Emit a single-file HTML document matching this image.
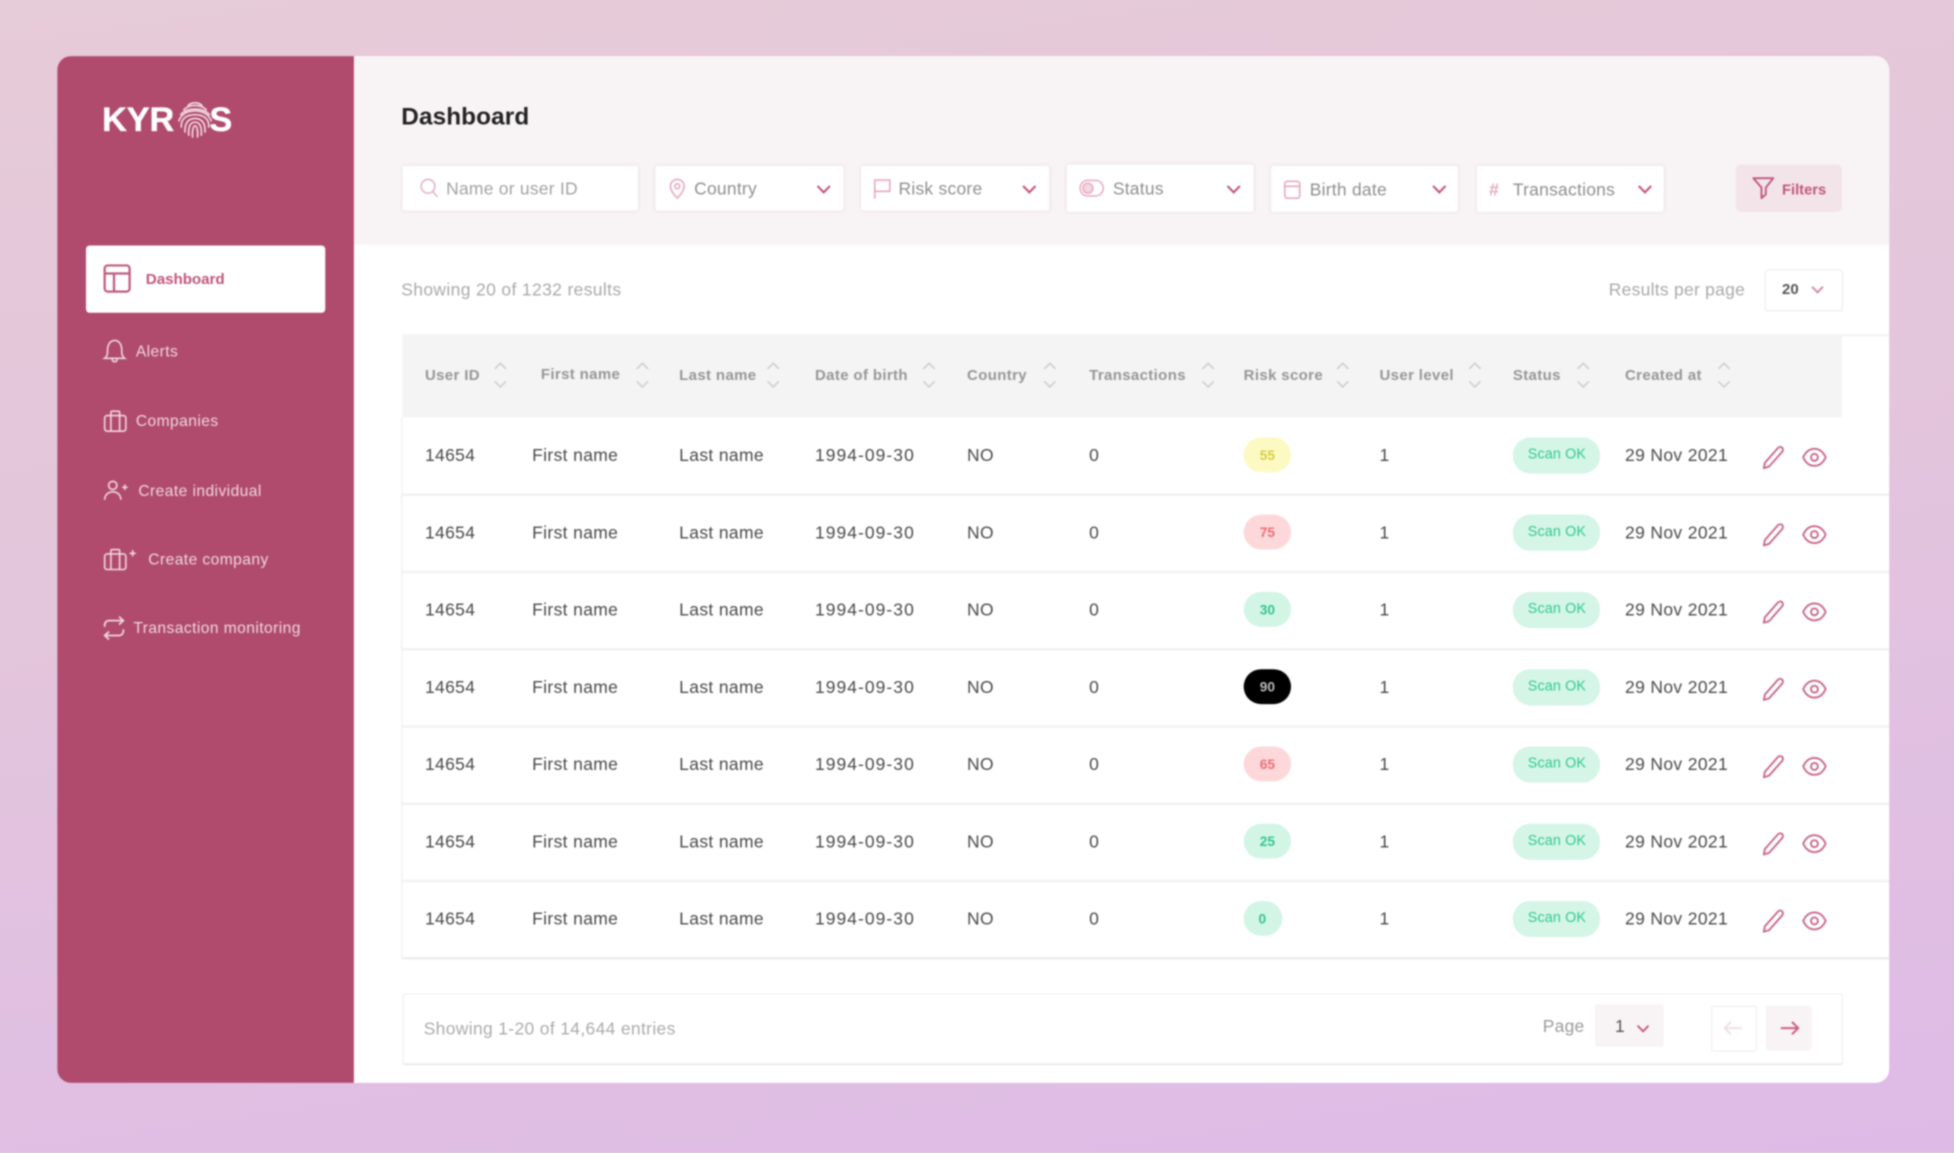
<!DOCTYPE html>
<html lang="en"><head><meta charset="utf-8"><title>Kyros Dashboard</title>
<style>
html,body{margin:0;padding:0;width:1954px;height:1152px;overflow:hidden;background:#e2c4de}
#bg{position:absolute;left:0;top:0;width:1954px;height:1152px;background:linear-gradient(172deg,#e6cbd8 0%,#e3c5dc 45%,#debbe7 100%)}
#w{position:absolute;left:0;top:0;width:1568px;height:925px;transform:scale(1.24617);transform-origin:0 0;filter:blur(.7px);font-family:"Liberation Sans",sans-serif}
#w div,#w span,#w svg{position:absolute}
.t{line-height:0;white-space:nowrap;top:0}
.p{left:46px;top:45px;width:1470px;height:823.500px;background:#fff;border-radius:11px;overflow:hidden}
.side{left:46px;top:45px;width:238px;height:823.500px;background:#b04b6d;border-radius:11px 0 0 11px}
.band{left:284px;top:45px;width:1232px;height:151px;background:#f8f3f5;border-radius:0 11px 0 0}
.nav{color:#f0d5df;font-size:12.500px;letter-spacing:.35px}
.f{background:#fff;border-radius:2px;box-shadow:0 0 3px rgba(180,150,165,.22)}
.ft{color:#8e8e8e;font-size:14px;letter-spacing:.2px;margin-top:.5px}
.h{color:#969696;font-size:12px;font-weight:700;letter-spacing:.3px;top:301px}
.r{left:0;width:1568px;height:0}
.c{color:#4a4a4a;font-size:14px;letter-spacing:.3px;top:-.5px}
.d{letter-spacing:.85px}
.b{height:28px;top:-14px;width:38px;left:998px;border-radius:14px}
.bt{left:1017px;font-size:11px;font-weight:700;transform:translateX(-50%);top:.5px}
.s{left:1214px;top:-14.500px;width:70px;height:29px;border-radius:14px;background:#d5f5e7}
.st{left:1226px;color:#2fcb90;font-size:11.500px;letter-spacing:.1px}
.y{background:#fdf9c3}.yt{color:#d8ce40}
.e{background:#fdd8da}.et{color:#ec6e75}
.g{background:#d2f5e6}.gt{color:#35c48e}
.k{background:#000}.kt{color:#bbb}
.l{left:323px;width:1193px;height:2px;background:#f1f2f2}
svg{overflow:visible;fill:none}
</style></head><body>
<div id="bg"></div>
<div id="w">
<svg width="0" height="0" style="left:0;top:0">
<defs>
<symbol id="pen" viewBox="0 0 18 20" overflow="visible"><path d="M2.200 14.400 12.600 2.600c1-1.100 2.500-1.200 3.400-.4 1 .9 1 2.400 0 3.500L5.600 17.400l-4.200 1.300z" stroke="#c9688a" stroke-width="1.500" stroke-linejoin="round"/></symbol>
<symbol id="eye" viewBox="0 0 20 16" overflow="visible"><path d="M1 8C3 3.600 6.200 1.200 10 1.200S17 3.600 19 8c-2 4.400-5.200 6.800-9 6.800S3 12.400 1 8z" stroke="#c9688a" stroke-width="1.500"/><circle cx="10" cy="8" r="2.800" stroke="#c9688a" stroke-width="1.500"/></symbol>
<symbol id="chev" viewBox="0 0 12 8" overflow="visible"><path d="M1 1.200 6 6.400l5-5.200" stroke="#c4567d" stroke-width="1.700"/></symbol>
<symbol id="sort" viewBox="0 0 11 22" overflow="visible"><path d="M1 6 5.500 1.500 10 6M1 16l4.500 4.500L10 16" stroke="#cfcfcf" stroke-width="1.300"/></symbol>
</defs></svg>

<div class="p"></div>
<div class="band"></div>
<div class="side"></div>

<!-- logo -->
<span class="t" style="left:82px;top:96px;color:#fff;font-size:27.500px;font-weight:700;letter-spacing:-.1px;-webkit-text-stroke:.3px #fff">KYR</span>
<span class="t" style="left:168px;top:96px;color:#fff;font-size:27.500px;font-weight:700;-webkit-text-stroke:.3px #fff">S</span>
<svg style="left:142px;top:81px" width="29" height="30" viewBox="0 0 29 30"><g stroke="#f3dbe3" stroke-width="1.300" stroke-linecap="round">
<path d="M9 3.500C12 .8 17 .8 20 3.500"/><path d="M5.500 7C10 2.500 19 2.500 23.500 7"/><path d="M3 11C8 5 21 5 26 11"/><path d="M1.500 16C4 9.500 10 8 14.500 8S25 9.500 27.500 16"/><path d="M3.500 21C3 14 8 11 14.500 11S26 14 25.500 21"/><path d="M6.500 25C6 18 9 14 14.500 14S23 18 22.500 25"/><path d="M9.500 27.500C9 21 10.500 17 14.500 17S20 21 19.500 27.500"/><path d="M12.500 29C12.200 24 13 20 14.500 20S17 24 16.500 29"/></g></svg>

<!-- nav -->
<div style="left:68.500px;top:196.500px;width:192.500px;height:54px;background:#fff;border-radius:3px"></div>
<svg style="left:83px;top:212px" width="22" height="23" viewBox="0 0 22 23"><g stroke="#c05a7e" stroke-width="1.800"><rect x="1" y="1" width="20" height="21" rx="2.500"/><path d="M1 7.500H21M8.500 7.500V22"/></g></svg>
<span class="t" style="left:117px;top:224px;color:#c2557c;font-size:12.200px;font-weight:700;letter-spacing:-.05px">Dashboard</span>

<svg style="left:83px;top:272px" width="18" height="20" viewBox="0 0 18 20"><g stroke="#f0d5df" stroke-width="1.300"><path d="M1 15.500c2-1.500 2.300-3 2.300-6.500C3.300 4.500 5.500 1.200 9 1.200s5.700 3.300 5.700 7.800c0 3.500.3 5 2.300 6.500z"/><path d="M7 16c0 3 4 3 4 0"/></g></svg>
<span class="t nav" style="left:109px;top:282px">Alerts</span>

<svg style="left:83px;top:329px" width="19" height="18" viewBox="0 0 19 18"><g stroke="#f0d5df" stroke-width="1.300"><rect x="1" y="4.500" width="17" height="12.500" rx="2"/><path d="M6 4.500V2c0-.6.400-1 1-1h5c.6 0 1 .4 1 1v2.500M6 4.500V17M13 4.500V17"/></g></svg>
<span class="t nav" style="left:109px;top:338px">Companies</span>

<svg style="left:83px;top:385px" width="20" height="17" viewBox="0 0 20 17"><g stroke="#f0d5df" stroke-width="1.300"><circle cx="7.500" cy="4.500" r="3.300"/><path d="M1 16c0-4 3-6.300 6.500-6.300S14 12 14 16M15 6h4.500M17.200 3.800v4.400"/></g></svg>
<span class="t nav" style="left:111px;top:394px">Create individual</span>

<svg style="left:83px;top:440px" width="29" height="18" viewBox="0 0 29 18"><g stroke="#f0d5df" stroke-width="1.300"><rect x="1" y="4.500" width="17" height="12.500" rx="2"/><path d="M6 4.500V2c0-.6.400-1 1-1h5c.6 0 1 .4 1 1v2.500M6 4.500V17M13 4.500V17M21 4h5M23.500 1.500v5"/></g></svg>
<span class="t nav" style="left:119px;top:449px">Create company</span>

<svg style="left:83px;top:494px" width="17" height="20" viewBox="0 0 17 20"><g stroke="#f0d5df" stroke-width="1.400"><path d="M1 9V7.500C1 5.500 2.500 4 4.500 4H16M12.500.8 16 4l-3.500 3.200M16 11v1.500c0 2-1.500 3.500-3.500 3.500H1M4.500 12.800 1 16l3.500 3.200"/></g></svg>
<span class="t nav" style="left:107px;top:504px">Transaction monitoring</span>

<!-- title -->
<span class="t" style="left:322px;top:94px;color:#232323;font-size:19.500px;font-weight:700;letter-spacing:.1px">Dashboard</span>

<!-- filters -->
<div class="f" style="left:323px;top:133px;width:189px;height:35.500px"></div>
<svg style="left:337px;top:143px" width="15" height="16" viewBox="0 0 15 16"><g stroke="#e5b4c6" stroke-width="1.300"><circle cx="6.500" cy="6.500" r="5.500"/><path d="M10.500 11l3.500 4"/></g></svg>
<span class="t ft" style="left:358px;top:150px;color:#a2a2a2">Name or user ID</span>

<div class="f" style="left:526px;top:132.500px;width:151px;height:36px"></div>
<svg style="left:537px;top:143px" width="13" height="17" viewBox="0 0 13 17"><g stroke="#e5a9bf" stroke-width="1.300"><path d="M6.500 16C3 12.500 1 9.500 1 6.500a5.500 5.500 0 0 1 11 0C12 9.500 10 12.500 6.500 16z"/><circle cx="6.500" cy="6.500" r="2"/></g></svg>
<span class="t ft" style="left:557px;top:150px">Country</span>
<svg style="left:655px;top:148px" width="12" height="7"><use href="#chev" width="12" height="8"/></svg>

<div class="f" style="left:691px;top:132.500px;width:151px;height:36px"></div>
<svg style="left:701px;top:143px" width="14" height="17" viewBox="0 0 14 17"><path d="M1 16.500V1.500H13V10.500H1" stroke="#e5a9bf" stroke-width="1.300"/></svg>
<span class="t ft" style="left:721px;top:150px">Risk score</span>
<svg style="left:820px;top:148px" width="12" height="7"><use href="#chev" width="12" height="8"/></svg>

<div class="f" style="left:856px;top:131.500px;width:150px;height:38px"></div>
<svg style="left:866px;top:144px" width="20" height="14" viewBox="0 0 20 14"><g stroke="#e5a9bf" stroke-width="1.200"><rect x=".7" y=".7" width="18.600" height="12.600" rx="6.300"/><circle cx="7" cy="7" r="4" fill="#f5d7e1"/></g></svg>
<span class="t ft" style="left:893px;top:150px">Status</span>
<svg style="left:984px;top:148px" width="12" height="7"><use href="#chev" width="12" height="8"/></svg>

<div class="f" style="left:1020px;top:132.500px;width:150px;height:37px"></div>
<svg style="left:1030px;top:144px" width="14" height="16" viewBox="0 0 14 16"><g stroke="#e5a9bf" stroke-width="1.300"><rect x="1" y="1.500" width="12" height="13.500" rx="2"/><path d="M1 5.500H13"/></g></svg>
<span class="t ft" style="left:1051px;top:151px">Birth date</span>
<svg style="left:1149px;top:148px" width="12" height="7"><use href="#chev" width="12" height="8"/></svg>

<div class="f" style="left:1185px;top:132.500px;width:150px;height:37px"></div>
<span class="t" style="left:1195px;top:152px;color:#e5a9bf;font-size:14px;font-weight:700">#</span>
<span class="t ft" style="left:1214px;top:151px">Transactions</span>
<svg style="left:1314px;top:148px" width="12" height="7"><use href="#chev" width="12" height="8"/></svg>

<div style="left:1393px;top:132px;width:85px;height:38px;background:#f3e4ea;border-radius:4px"></div>
<svg style="left:1406px;top:142px" width="18" height="18" viewBox="0 0 18 18"><path d="M1 1H17L11 8.500V14L7.500 17V8.500z" stroke="#c0577c" stroke-width="1.500" stroke-linejoin="round"/></svg>
<span class="t" style="left:1430px;top:151.500px;color:#c0577c;font-size:11.800px;font-weight:700">Filters</span>

<!-- results bar -->
<span class="t" style="left:322px;top:231.500px;color:#a9a9a9;font-size:14px;letter-spacing:.3px">Showing 20 of 1232 results</span>
<span class="t" style="left:1291px;top:231.500px;color:#a9a9a9;font-size:14px;letter-spacing:.22px">Results per page</span>
<div style="left:1416px;top:216px;width:61px;height:32px;background:#fff;border:1px solid #eeeeee;border-radius:3px"></div>
<span class="t" style="left:1430px;top:232px;color:#555;font-size:12px;font-weight:700">20</span>
<svg style="left:1453px;top:229px" width="11" height="6"><use href="#chev" width="11" height="7" style="opacity:.7"/></svg>

<!-- table -->
<div style="left:323px;top:268px;width:1155px;height:67px;background:#f4f4f4;border-radius:2px 2px 0 0"></div>
<div style="left:1478px;top:268px;width:38px;height:2px;background:#f4f4f4"></div>
<div style="left:322px;top:335px;width:1px;height:434px;background:#f0f0f0"></div>
<span class="t h" style="left:341px">User ID</span><svg style="left:396px;top:290px" width="11" height="22"><use href="#sort" width="11" height="22"/></svg>
<span class="t h" style="left:434px;top:300px">First name</span><svg style="left:510px;top:290px" width="11" height="22"><use href="#sort" width="11" height="22"/></svg>
<span class="t h" style="left:545px">Last name</span><svg style="left:615px;top:290px" width="11" height="22"><use href="#sort" width="11" height="22"/></svg>
<span class="t h" style="left:654px">Date of birth</span><svg style="left:740px;top:290px" width="11" height="22"><use href="#sort" width="11" height="22"/></svg>
<span class="t h" style="left:776px">Country</span><svg style="left:837px;top:290px" width="11" height="22"><use href="#sort" width="11" height="22"/></svg>
<span class="t h" style="left:874px">Transactions</span><svg style="left:964px;top:290px" width="11" height="22"><use href="#sort" width="11" height="22"/></svg>
<span class="t h" style="left:998px">Risk score</span><svg style="left:1072px;top:290px" width="11" height="22"><use href="#sort" width="11" height="22"/></svg>
<span class="t h" style="left:1107px">User level</span><svg style="left:1178px;top:290px" width="11" height="22"><use href="#sort" width="11" height="22"/></svg>
<span class="t h" style="left:1214px">Status</span><svg style="left:1265px;top:290px" width="11" height="22"><use href="#sort" width="11" height="22"/></svg>
<span class="t h" style="left:1304px">Created at</span><svg style="left:1378px;top:290px" width="11" height="22"><use href="#sort" width="11" height="22"/></svg>

<div class="r" style="top:365px"><span class="t c" style="left:341px">14654</span><span class="t c" style="left:427px">First name</span><span class="t c" style="left:545px">Last name</span><span class="t c d" style="left:654px">1994-09-30</span><span class="t c" style="left:776px">NO</span><span class="t c" style="left:874px">0</span><div class="b y"></div><span class="t bt yt">55</span><span class="t c" style="left:1107px">1</span><div class="s"></div><span class="t st">Scan OK</span><span class="t c" style="left:1304px">29 Nov 2021</span><svg style="left:1414px;top:-8px" width="18" height="20"><use href="#pen" width="18" height="20"/></svg><svg style="left:1446px;top:-6px" width="20" height="16"><use href="#eye" width="20" height="16"/></svg></div>
<div class="l" style="top:396px"></div>
<div class="r" style="top:427px"><span class="t c" style="left:341px">14654</span><span class="t c" style="left:427px">First name</span><span class="t c" style="left:545px">Last name</span><span class="t c d" style="left:654px">1994-09-30</span><span class="t c" style="left:776px">NO</span><span class="t c" style="left:874px">0</span><div class="b e"></div><span class="t bt et">75</span><span class="t c" style="left:1107px">1</span><div class="s"></div><span class="t st">Scan OK</span><span class="t c" style="left:1304px">29 Nov 2021</span><svg style="left:1414px;top:-8px" width="18" height="20"><use href="#pen" width="18" height="20"/></svg><svg style="left:1446px;top:-6px" width="20" height="16"><use href="#eye" width="20" height="16"/></svg></div>
<div class="l" style="top:458px"></div>
<div class="r" style="top:489px"><span class="t c" style="left:341px">14654</span><span class="t c" style="left:427px">First name</span><span class="t c" style="left:545px">Last name</span><span class="t c d" style="left:654px">1994-09-30</span><span class="t c" style="left:776px">NO</span><span class="t c" style="left:874px">0</span><div class="b g"></div><span class="t bt gt">30</span><span class="t c" style="left:1107px">1</span><div class="s"></div><span class="t st">Scan OK</span><span class="t c" style="left:1304px">29 Nov 2021</span><svg style="left:1414px;top:-8px" width="18" height="20"><use href="#pen" width="18" height="20"/></svg><svg style="left:1446px;top:-6px" width="20" height="16"><use href="#eye" width="20" height="16"/></svg></div>
<div class="l" style="top:520px"></div>
<div class="r" style="top:551px"><span class="t c" style="left:341px">14654</span><span class="t c" style="left:427px">First name</span><span class="t c" style="left:545px">Last name</span><span class="t c d" style="left:654px">1994-09-30</span><span class="t c" style="left:776px">NO</span><span class="t c" style="left:874px">0</span><div class="b k"></div><span class="t bt kt">90</span><span class="t c" style="left:1107px">1</span><div class="s"></div><span class="t st">Scan OK</span><span class="t c" style="left:1304px">29 Nov 2021</span><svg style="left:1414px;top:-8px" width="18" height="20"><use href="#pen" width="18" height="20"/></svg><svg style="left:1446px;top:-6px" width="20" height="16"><use href="#eye" width="20" height="16"/></svg></div>
<div class="l" style="top:582px"></div>
<div class="r" style="top:613px"><span class="t c" style="left:341px">14654</span><span class="t c" style="left:427px">First name</span><span class="t c" style="left:545px">Last name</span><span class="t c d" style="left:654px">1994-09-30</span><span class="t c" style="left:776px">NO</span><span class="t c" style="left:874px">0</span><div class="b e"></div><span class="t bt et">65</span><span class="t c" style="left:1107px">1</span><div class="s"></div><span class="t st">Scan OK</span><span class="t c" style="left:1304px">29 Nov 2021</span><svg style="left:1414px;top:-8px" width="18" height="20"><use href="#pen" width="18" height="20"/></svg><svg style="left:1446px;top:-6px" width="20" height="16"><use href="#eye" width="20" height="16"/></svg></div>
<div class="l" style="top:644px"></div>
<div class="r" style="top:675px"><span class="t c" style="left:341px">14654</span><span class="t c" style="left:427px">First name</span><span class="t c" style="left:545px">Last name</span><span class="t c d" style="left:654px">1994-09-30</span><span class="t c" style="left:776px">NO</span><span class="t c" style="left:874px">0</span><div class="b g"></div><span class="t bt gt">25</span><span class="t c" style="left:1107px">1</span><div class="s"></div><span class="t st">Scan OK</span><span class="t c" style="left:1304px">29 Nov 2021</span><svg style="left:1414px;top:-8px" width="18" height="20"><use href="#pen" width="18" height="20"/></svg><svg style="left:1446px;top:-6px" width="20" height="16"><use href="#eye" width="20" height="16"/></svg></div>
<div class="l" style="top:706px"></div>
<div class="r" style="top:737px"><span class="t c" style="left:341px">14654</span><span class="t c" style="left:427px">First name</span><span class="t c" style="left:545px">Last name</span><span class="t c d" style="left:654px">1994-09-30</span><span class="t c" style="left:776px">NO</span><span class="t c" style="left:874px">0</span><div class="b g" style="width:31px"></div><span class="t bt gt" style="left:1013px">0</span><span class="t c" style="left:1107px">1</span><div class="s"></div><span class="t st">Scan OK</span><span class="t c" style="left:1304px">29 Nov 2021</span><svg style="left:1414px;top:-8px" width="18" height="20"><use href="#pen" width="18" height="20"/></svg><svg style="left:1446px;top:-6px" width="20" height="16"><use href="#eye" width="20" height="16"/></svg></div>
<div class="l" style="top:768px;background:#ececec"></div>

<!-- footer -->
<div style="left:323px;top:797px;width:1154px;height:55px;background:#fff;border:1px solid #f0f0f0;border-bottom:2px solid #efefef;border-radius:2px"></div>
<span class="t" style="left:340px;top:825px;color:#ababab;font-size:14px;letter-spacing:.28px">Showing 1-20 of 14,644 entries</span>
<span class="t" style="left:1238px;top:823px;color:#9a9a9a;font-size:14px;letter-spacing:.2px">Page</span>
<div style="left:1280px;top:806px;width:55px;height:34px;background:#f8f3f5;border-radius:2px"></div>
<span class="t" style="left:1296px;top:823px;color:#555;font-size:14px">1</span>
<svg style="left:1313px;top:822px" width="11" height="6"><use href="#chev" width="11" height="7"/></svg>
<div style="left:1373px;top:807px;width:35px;height:35px;background:#fff;border:1px solid #f0f0f0;border-radius:2px"></div>
<svg style="left:1383px;top:819px" width="16" height="12" viewBox="0 0 16 12"><path d="M15 6H1M6 1 1 6l5 5" stroke="#f0e0e6" stroke-width="1.600"/></svg>
<div style="left:1417px;top:807px;width:37px;height:36px;background:#f8f3f5;border-radius:2px"></div>
<svg style="left:1428px;top:819px" width="16" height="12" viewBox="0 0 16 12"><path d="M1 6h14M10 1l5 5-5 5" stroke="#cb6186" stroke-width="1.600"/></svg>
</div>
</body></html>
